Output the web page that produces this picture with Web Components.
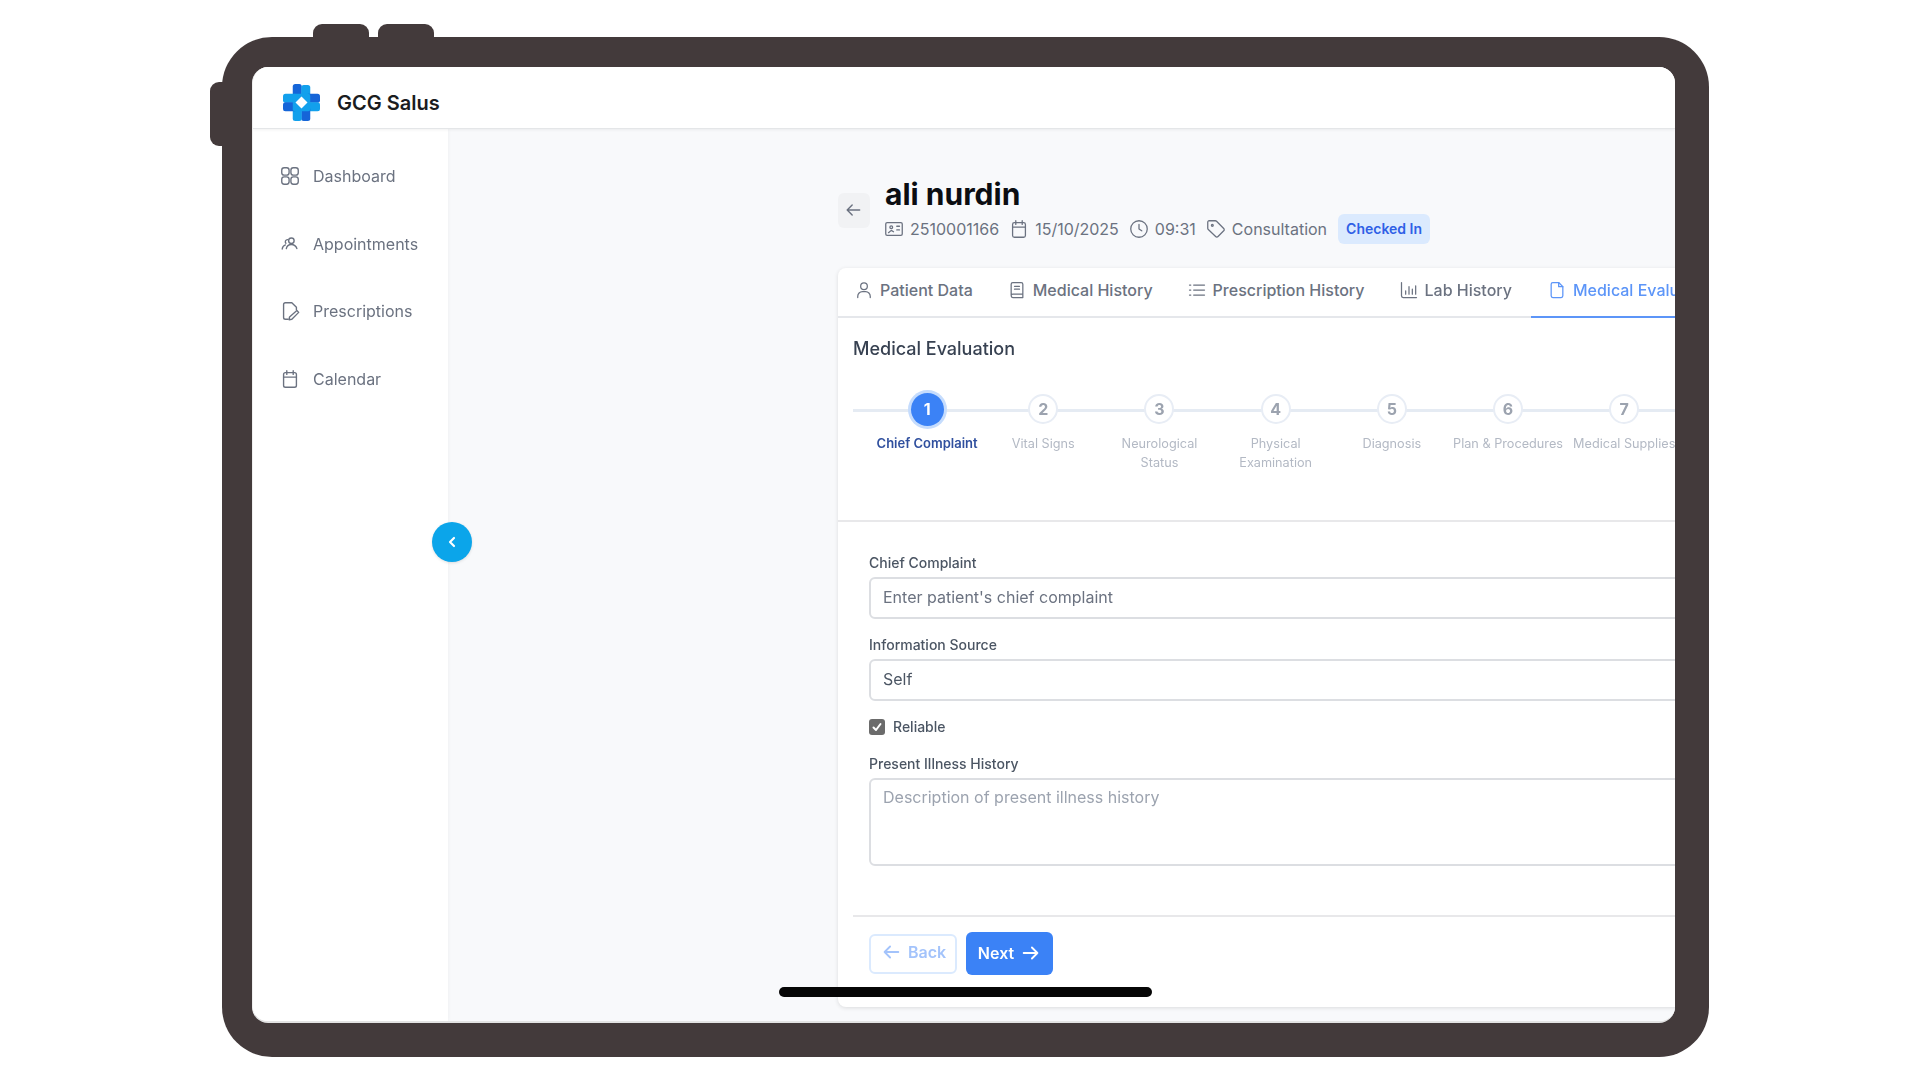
<!DOCTYPE html>
<html lang="en">
<head>
<meta charset="utf-8">
<title>GCG Salus</title>
<style>
html,body{margin:0;background:#fff;font-family:"Inter","Liberation Sans",sans-serif;}
body{width:1920px;height:1080px;overflow:hidden;padding:37px 0 0 222px;box-sizing:border-box;}
</style>
</head>
<body>
<device-frame>
  <app-header></app-header>
  <div style="display:flex;flex:1;min-height:0;">
    <side-nav>
      <nav-item icon="grid">Dashboard</nav-item>
      <nav-item icon="users">Appointments</nav-item>
      <nav-item icon="filepen">Prescriptions</nav-item>
      <nav-item icon="calendar">Calendar</nav-item>
    </side-nav>
    <main-area>
      <patient-header name="ali nurdin" mrn="2510001166" date="15/10/2025" time="09:31" kind="Consultation" status="Checked In"></patient-header>
      <eval-card>
        <tab-bar>
          <tab-item icon="user">Patient Data</tab-item>
          <tab-item icon="book">Medical History</tab-item>
          <tab-item icon="list">Prescription History</tab-item>
          <tab-item icon="chart">Lab History</tab-item>
          <tab-item icon="file" active>Medical Evaluation</tab-item>
        </tab-bar>
        <step-bar title="Medical Evaluation">
          <step-item num="1" active>Chief Complaint</step-item>
          <step-item num="2">Vital Signs</step-item>
          <step-item num="3">Neurological Status</step-item>
          <step-item num="4">Physical Examination</step-item>
          <step-item num="5">Diagnosis</step-item>
          <step-item num="6">Plan &amp; Procedures</step-item>
          <step-item num="7">Medical Supplies</step-item>
        </step-bar>
        <complaint-form></complaint-form>
        <wizard-footer></wizard-footer>
      </eval-card>
    </main-area>
  </div>
</device-frame>

<script>
const ICONS = {
  grid:'<rect x="3" y="3" width="8" height="8" rx="2.6"/><rect x="13" y="3" width="8" height="8" rx="2.6"/><rect x="3" y="13" width="8" height="8" rx="2.6"/><rect x="13" y="13" width="8" height="8" rx="2.6"/>',
  users:'<circle cx="13.5" cy="8.5" r="3"/><path d="M8 17c.5-3 2.800-4.500 5.500-4.500s5 1.500 6 4.500"/><path d="M9.500 7.200a2.400 2.400 0 0 0-2 4"/><path d="M3.500 17.500c.3-2.500 1.700-4 3.500-4.500"/>',
  filepen:'<path d="M10 21H7a2 2 0 0 1-2-2V5a2 2 0 0 1 2-2h7l5 5v2.500"/><path d="M19.500 11.500l2 2-7.500 7.500-3 .5.500-3z"/>',
  calendar:'<rect x="5" y="5" width="14" height="16" rx="2"/><path d="M15.500 3v4M8.500 3v4M5 10h14"/>',
  idcard:'<rect x="3" y="5" width="18" height="14" rx="1.500"/><circle cx="9" cy="10" r="1.500"/><path d="M6 16l3-2.500 2.500 1.500M15 9h3M15 13h3"/>',
  clock:'<circle cx="12" cy="12" r="9"/><path d="M12 7v5l3 2"/>',
  tag:'<path d="M3 4.500A1.500 1.500 0 0 1 4.500 3h6.700a2 2 0 0 1 1.400.6l7.800 7.800a1.800 1.800 0 0 1 0 2.600l-6.200 6.200a1.800 1.800 0 0 1-2.600 0L3.600 12.600a2 2 0 0 1-.6-1.400z"/><circle cx="8" cy="8" r="1"/>',
  user:'<circle cx="12" cy="7.500" r="4"/><path d="M4.500 21v-1.500A5.500 5.500 0 0 1 10 14h4a5.500 5.500 0 0 1 5.500 5.500V21"/>',
  book:'<path d="M5 18V5a2 2 0 0 1 2-2h10a2 2 0 0 1 2 2v16H7a2 2 0 0 1-2-2 2 2 0 0 1 2-2h12"/><path d="M9 7.500h6M9 11h6"/>',
  list:'<path d="M8 6h13M8 12h13M8 18h13M3 6h1.500M3 12h1.500M3 18h1.500"/>',
  chart:'<path d="M3 3v16a2 2 0 0 0 2 2h16"/><path d="M8 17v-4M12 17V8M16 17v-6M20 17V7"/>',
  file:'<path d="M14 3H7a2 2 0 0 0-2 2v14a2 2 0 0 0 2 2h10a2 2 0 0 0 2-2V8z"/><path d="M14 3v5h5"/>',
  left:'<path d="M20 12H5M11 6l-6 6 6 6"/>',
  right:'<path d="M4 12h15M13 6l6 6-6 6"/>',
  chevron:'<path d="M15 6l-6 6 6 6"/>'
};

class UiIcon extends HTMLElement {
  connectedCallback(){
    const size = this.getAttribute('size') || 20;
    const sw = this.getAttribute('sw') || 1.7;
    this.attachShadow({mode:'open'}).innerHTML = `
<style>
:host{display:inline-flex;flex:none;width:${size}px;height:${size}px;}
svg{width:100%;height:100%;fill:none;stroke:currentColor;stroke-width:${sw};stroke-linecap:round;stroke-linejoin:round;}
</style>
<svg viewBox="0 0 24 24">${ICONS[this.getAttribute('name')]}</svg>`;
  }
}
customElements.define('ui-icon', UiIcon);

class DeviceFrame extends HTMLElement {
  constructor(){
    super();
    this.attachShadow({mode:'open'}).innerHTML = `
<style>
:host{display:block;position:relative;width:1487px;height:1020px;box-sizing:border-box;background:#433a3b;border-radius:50px;padding:30px 34px 34px 30px;}
.screen{position:relative;height:100%;background:#fff;border-radius:16px;overflow:hidden;display:flex;flex-direction:column;box-sizing:border-box;border-bottom:2px solid #e3e3e3;border-left:1px solid #efefef;filter:blur(.5px);}
.key{position:absolute;background:#433a3b;}
.top{top:-13px;width:56px;height:20px;border-radius:9px 9px 0 0;}
.k1{left:91px;}
.k2{left:156px;}
.side{left:-12px;top:45px;width:20px;height:64px;border-radius:9px 0 0 9px;}
.home{position:absolute;left:526px;top:920px;width:373px;height:10px;border-radius:5px;background:#060606;z-index:5;}
.toggle{position:absolute;left:179px;top:455px;width:40px;height:40px;border-radius:50%;background:#0ba5ea;color:#fff;display:flex;align-items:center;justify-content:center;z-index:4;box-shadow:0 1px 3px rgba(0,0,0,.12);}
</style>
<div class="key top k1"></div>
<div class="key top k2"></div>
<div class="key side"></div>
<div class="screen">
  <slot></slot>
  <div class="toggle"><ui-icon name="chevron" size="16" sw="3.200"></ui-icon></div>
  <div class="home"></div>
</div>`;
  }
}
customElements.define('device-frame', DeviceFrame);

class AppHeader extends HTMLElement {
  constructor(){
    super();
    this.attachShadow({mode:'open'}).innerHTML = `
<style>
:host{display:flex;flex:none;align-items:center;height:62px;box-sizing:border-box;padding:10px 0 0 30px;background:#fff;border-bottom:1px solid #e4e6e8;box-shadow:0 1px 3px rgba(0,0,0,.06);position:relative;z-index:2;gap:17px;}
svg{width:37px;height:37px;flex:none;}
span{font:600 20px/24px "Inter","Liberation Sans",sans-serif;color:#1a1c20;}
</style>
<svg viewBox="0 0 37 37">
  <rect x="9.750" y="0" width="9" height="14" rx="2.500" fill="#1565d8"/>
  <rect x="18.250" y="1" width="9" height="13" rx="2.500" fill="#12a0ec"/>
  <rect x="23" y="9.750" width="14" height="9" rx="2.500" fill="#1565d8"/>
  <rect x="23" y="18.250" width="14" height="9" rx="2.500" fill="#12a0ec"/>
  <rect x="18.250" y="23" width="9" height="14" rx="2.500" fill="#1565d8"/>
  <rect x="9.750" y="23" width="9" height="14" rx="2.500" fill="#12a0ec"/>
  <rect x="0" y="9.750" width="14" height="9" rx="2.500" fill="#12a0ec"/>
  <rect x="0" y="18.250" width="14" height="9" rx="2.500" fill="#1565d8"/>
  <rect x="9.750" y="9.750" width="17.500" height="17.500" rx="2" fill="#12a0ec"/>
  <path d="M18.500 12.500l6 6-6 6-6-6z" fill="#fff"/>
</svg>
<span>GCG Salus</span>`;
  }
}
customElements.define('app-header', AppHeader);

class SideNav extends HTMLElement {
  constructor(){
    super();
    this.attachShadow({mode:'open'}).innerHTML = `
<style>
:host{display:flex;flex-direction:column;flex:none;width:195px;box-sizing:border-box;padding-top:13px;background:#fff;box-shadow:1px 0 3px rgba(0,0,0,.03);position:relative;z-index:1;}
</style>
<slot></slot>`;
  }
}
customElements.define('side-nav', SideNav);

class NavItem extends HTMLElement {
  connectedCallback(){
    this.attachShadow({mode:'open'}).innerHTML = `
<style>
:host{display:flex;align-items:center;height:67.700px;padding-left:26px;gap:12px;font:400 16px/24px "Inter","Liberation Sans",sans-serif;color:#6b7280;}
</style>
<ui-icon name="${this.getAttribute('icon')}" size="22" sw="1.500"></ui-icon>
<slot></slot>`;
  }
}
customElements.define('nav-item', NavItem);

class MainArea extends HTMLElement {
  constructor(){
    super();
    this.attachShadow({mode:'open'}).innerHTML = `
<style>
:host{display:block;flex:1;min-width:0;box-sizing:border-box;padding:47px 0 0 390px;background:#f8f9fb;overflow:hidden;}
</style>
<slot></slot>`;
  }
}
customElements.define('main-area', MainArea);

class PatientHeader extends HTMLElement {
  connectedCallback(){
    const a = n => this.getAttribute(n);
    this.attachShadow({mode:'open'}).innerHTML = `
<style>
:host{display:flex;align-items:center;gap:15px;color:#6b7280;font:400 16px/24px "Inter","Liberation Sans",sans-serif;}
.back{width:32px;height:35px;border-radius:6px;background:#f1f2f4;display:flex;align-items:center;justify-content:center;flex:none;}
.back ui-icon{margin-left:-2px;}
h1{margin:0;font:700 30px/36px "Inter","Liberation Sans",sans-serif;color:#0b0d12;}
.meta{display:flex;align-items:center;height:30px;margin-top:2px;white-space:nowrap;}
.meta ui-icon{margin-right:5px;}
.meta ui-icon:first-child{margin-left:-2px;}
.meta span{margin-right:9px;}
.meta span:nth-last-child(2){margin-right:11px;}
.badge{height:30px;box-sizing:border-box;padding:0 8px;display:flex;align-items:center;border-radius:6px;background:#dbeafe;color:#2f5fe6;font:600 14px/20px "Inter","Liberation Sans",sans-serif;}
</style>
<div class="back"><ui-icon name="left" size="20" sw="1.700"></ui-icon></div>
<div>
  <h1>${a('name')}</h1>
  <div class="meta">
    <ui-icon name="idcard" size="22" sw="1.400"></ui-icon><span>${a('mrn')}</span>
    <ui-icon name="calendar" size="22" sw="1.400"></ui-icon><span>${a('date')}</span>
    <ui-icon name="clock" size="22" sw="1.400"></ui-icon><span>${a('time')}</span>
    <ui-icon name="tag" size="22" sw="1.400"></ui-icon><span>${a('kind')}</span>
    <div class="badge">${a('status')}</div>
  </div>
</div>`;
  }
}
customElements.define('patient-header', PatientHeader);

class EvalCard extends HTMLElement {
  constructor(){
    super();
    this.attachShadow({mode:'open'}).innerHTML = `
<style>
:host{display:block;width:1000px;height:739px;margin-top:24px;background:#fff;border-radius:8px;box-shadow:0 1px 4px rgba(0,0,0,.12);}
</style>
<slot></slot>`;
  }
}
customElements.define('eval-card', EvalCard);

class TabBar extends HTMLElement {
  constructor(){
    super();
    this.attachShadow({mode:'open'}).innerHTML = `
<style>
:host{display:flex;gap:2px;height:50px;box-sizing:border-box;border-bottom:2px solid #e5e7eb;white-space:nowrap;}
</style>
<slot></slot>`;
  }
}
customElements.define('tab-bar', TabBar);

class TabItem extends HTMLElement {
  connectedCallback(){
    const on = this.hasAttribute('active');
    this.attachShadow({mode:'open'}).innerHTML = `
<style>
:host{display:flex;align-items:center;gap:6px;height:50px;box-sizing:border-box;padding:0 16px 4px;font:500 16px/24px "Inter","Liberation Sans",sans-serif;color:${on?'#5c95f8':'#6b7280'};border-bottom:2px solid ${on?'#5c95f8':'transparent'};${on?'margin-left:1px;':''}}
</style>
<ui-icon name="${this.getAttribute('icon')}" size="20" sw="1.500"></ui-icon>
<slot></slot>`;
  }
}
customElements.define('tab-item', TabItem);

class StepBar extends HTMLElement {
  connectedCallback(){
    this.attachShadow({mode:'open'}).innerHTML = `
<style>
:host{display:block;height:204px;box-sizing:border-box;border-bottom:2px solid #e8e8ea;padding:17px 0 0 15px;}
h2{margin:0;font:500 18px/28px "Inter","Liberation Sans",sans-serif;color:#374151;}
.track{position:relative;display:flex;margin-top:31px;padding-left:16px;}
.track::before{content:"";position:absolute;left:0;right:0;top:15px;height:2.500px;background:#e5ebf3;}
</style>
<h2>${this.getAttribute('title')}</h2>
<div class="track"><slot></slot></div>`;
  }
}
customElements.define('step-bar', StepBar);

class StepItem extends HTMLElement {
  connectedCallback(){
    const on = this.hasAttribute('active');
    this.attachShadow({mode:'open'}).innerHTML = `
<style>
:host{display:flex;flex-direction:column;align-items:center;width:116.200px;flex:none;position:relative;font-family:"Inter","Liberation Sans",sans-serif;}
.dot{width:30px;height:30px;box-sizing:border-box;border-radius:50%;background:#fff;border:2.500px solid #e8edf5;color:#9ca3af;font-weight:700;font-size:16px;display:flex;align-items:center;justify-content:center;}
.on{background:#3b82f6;border:0;color:#fff;width:33px;height:33px;margin:-1.500px 0;box-shadow:0 0 0 3px #c5dcfd;}
.lbl{margin-top:10px;font-size:12.700px;line-height:19px;text-align:center;color:#b3b9c4;padding:0 2px;}
.lbl.cur{font-weight:600;color:#2f4f9e;font-size:13px;}
</style>
<div class="dot ${on?'on':''}">${this.getAttribute('num')}</div>
<div class="lbl ${on?'cur':''}"><slot></slot></div>`;
  }
}
customElements.define('step-item', StepItem);

class FormField extends HTMLElement {
  connectedCallback(){
    const multi = this.hasAttribute('multi');
    const val = this.getAttribute('value');
    this.attachShadow({mode:'open'}).innerHTML = `
<style>
:host{display:block;font-family:"Inter","Liberation Sans",sans-serif;}
label{display:block;margin-bottom:4px;font:500 14px/20px "Inter","Liberation Sans",sans-serif;color:#4b5563;}
.box{box-sizing:border-box;height:${multi?88:42}px;border:2px solid #dcdee2;border-radius:6px;padding:${multi?'5px 12px':'0 12px 2px'};display:flex;align-items:${multi?'flex-start':'center'};font-size:16px;line-height:24px;color:${val?'#4b5563':(multi?'#9ca3af':'#6b7280')};background:#fff;}
</style>
<label>${this.getAttribute('label')}</label>
<div class="box">${val || this.getAttribute('placeholder')}</div>`;
  }
}
customElements.define('form-field', FormField);

class ComplaintForm extends HTMLElement {
  constructor(){
    super();
    this.attachShadow({mode:'open'}).innerHTML = `
<style>
:host{display:flex;flex-direction:column;padding:31px 0 0 31px;gap:16px;}
.check{display:flex;align-items:center;gap:8px;height:20px;font:500 14px/20px "Inter","Liberation Sans",sans-serif;color:#4b5563;}
.mark{width:16px;height:16px;border-radius:3px;background:#6b6b6b;color:#fff;display:flex;align-items:center;justify-content:center;}
.gapfix{margin-top:1px;}
</style>
<form-field label="Chief Complaint" placeholder="Enter patient's chief complaint"></form-field>
<form-field label="Information Source" value="Self"></form-field>
<div class="check"><span class="mark"><svg width="12" height="12" viewBox="0 0 12 12" fill="none" stroke="currentColor" stroke-width="2" stroke-linecap="round" stroke-linejoin="round"><path d="M2.500 6.500l2.500 2.500 4.500-6"/></svg></span>Reliable</div>
<form-field class="gapfix" multi label="Present Illness History" placeholder="Description of present illness history"></form-field>`;
  }
}
customElements.define('complaint-form', ComplaintForm);

class WizardFooter extends HTMLElement {
  constructor(){
    super();
    this.attachShadow({mode:'open'}).innerHTML = `
<style>
:host{display:flex;align-items:center;gap:9px;margin:49px 0 0 15px;padding:15px 16px 0;border-top:2px solid #e8e8ea;font:600 16px/24px "Inter","Liberation Sans",sans-serif;}
.btn{display:flex;align-items:center;justify-content:center;gap:6px;box-sizing:border-box;border-radius:6px;}
.back{width:88px;height:40px;border:2px solid #dbeafe;color:#a3c3fb;padding-bottom:4px;}
.next{width:87px;height:43px;background:#3b82f6;color:#fff;padding:0 0 1px 1px;}
</style>
<div class="btn back"><ui-icon name="left" size="22" sw="2"></ui-icon>Back</div>
<div class="btn next">Next<ui-icon name="right" size="22" sw="2"></ui-icon></div>`;
  }
}
customElements.define('wizard-footer', WizardFooter);
</script>
</body>
</html>
